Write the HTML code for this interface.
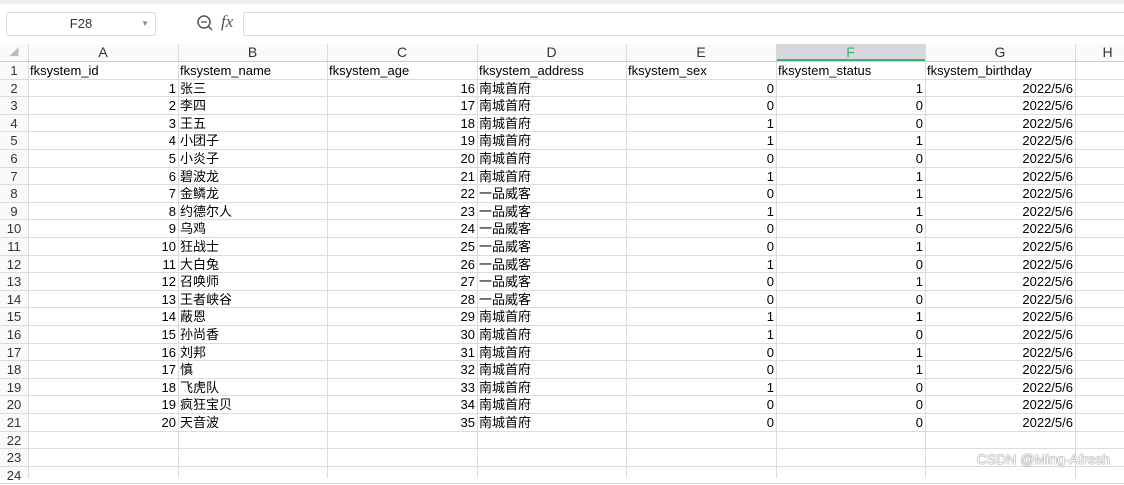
<!DOCTYPE html><html><head><meta charset="utf-8"><style>
body{margin:0;width:1124px;height:478px;overflow:hidden;background:#fff;font-family:"Liberation Sans","Noto Sans CJK SC",sans-serif;font-size:13px;color:#000;position:relative}
.top{position:absolute;left:0;top:0;width:1124px;height:4px;background:#f0f0f0}
.nb{position:absolute;left:6px;top:12px;width:148px;height:22px;border:1px solid #dcdcdc;border-radius:2px;text-align:center;line-height:22px;color:#333}
.nb span{position:absolute;right:6px;top:0;font-size:8px;color:#888}
.fx{position:absolute;left:243px;top:12px;width:890px;height:22px;border:1px solid #dcdcdc;border-radius:2px}
.fxl{position:absolute;left:221px;top:12px;font-family:"Liberation Serif",serif;font-style:italic;font-size:17px;color:#555}
.c{position:absolute;white-space:nowrap;overflow:hidden;line-height:19px;box-sizing:border-box;padding:0 2px}
.vl{position:absolute;width:1px;background:#d8dbe3;top:44px;height:434px}
.hl{position:absolute;height:1px;background:#d8dbe3;left:0;width:1124px}
.wm{position:absolute;right:14px;top:451px;font-size:14px;color:#fff;text-shadow:0 0 1px #666,0 0 1px #666}
</style></head><body>
<div class="top"></div>
<div class="nb">F28<span>▼</span></div>
<svg style="position:absolute;left:196px;top:14px" width="18" height="18" viewBox="0 0 18 18"><circle cx="8" cy="8" r="6" fill="none" stroke="#555" stroke-width="1.5"/><line x1="12.5" y1="12.5" x2="16" y2="16" stroke="#555" stroke-width="1.5"/><line x1="5" y1="8" x2="11" y2="8" stroke="#555" stroke-width="1.3"/></svg>
<div class="fxl">fx</div>
<div class="fx"></div>
<div style="position:absolute;left:0;top:44px;width:1124px;height:17px;background:#fafafa"></div>
<div style="position:absolute;left:0;top:61px;width:28px;height:417px;background:#fafafa"></div>
<div style="position:absolute;left:776px;top:44px;width:149px;height:15px;background:#d5d7dc;border-bottom:2px solid #3bb07a"></div>
<div id="g"></div>
<div class="wm">CSDN @Ming-Afresh</div>
<script>
var X=[0,28,178,327,477,626,776,925,1075,1140];
var n=["张三","李四","王五","小团子","小炎子","碧波龙","金鳞龙","约德尔人","乌鸡","狂战士","大白兔","召唤师","王者峡谷","蔽恩","孙尚香","刘邦","慎","飞虎队","疯狂宝贝","天音波"];
var s=[0,0,1,1,0,1,0,1,0,0,1,0,0,1,1,0,0,1,0,0],st=[1,0,0,1,0,1,1,1,0,1,0,1,0,1,0,1,1,0,0,0];
var h="";
for(var k=1;k<X.length-1;k++)h+='<div class="vl" style="left:'+X[k]+'px"></div>';
h+='<div class="hl" style="top:61px;background:#c8ccd6"></div>';
var L="ABCDEFGH";
h+='<div class="c" style="left:0;top:43px;width:28px;text-align:center;font-size:9px;color:#bbb">◢</div>';
for(var k=0;k<8;k++)h+='<div class="c" style="left:'+X[k+1]+'px;top:43px;width:'+(X[k+2]-X[k+1])+'px;text-align:center;font-size:14px;color:'+(k==5?'#3bb07a':'#333')+'">'+L[k]+'</div>';
var rows=[["fksystem_id","fksystem_name","fksystem_age","fksystem_address","fksystem_sex","fksystem_status","fksystem_birthday"]];
for(var i=0;i<20;i++)rows.push([i+1,n[i],i+16,(i>=6&&i<=12)?"一品威客":"南城首府",s[i],st[i],"2022/5/6"]);
for(var r=0;r<24;r++){var y=61+r*17.6;
h+='<div class="hl" style="top:'+(y+17.6).toFixed(1)+'px"></div>';
h+='<div class="c" style="left:0;top:'+y+'px;width:28px;text-align:center;color:#333;padding:0">'+(r+1)+'</div>';
if(r<rows.length)for(var k=0;k<7;k++){var right=r>0&&k!=1&&k!=3;
h+='<div class="c" style="left:'+X[k+1]+'px;top:'+y+'px;width:'+(X[k+2]-X[k+1])+'px;text-align:'+(right?'right':'left')+'">'+rows[r][k]+'</div>';}}
document.getElementById("g").innerHTML=h;
</script>
</body></html>
